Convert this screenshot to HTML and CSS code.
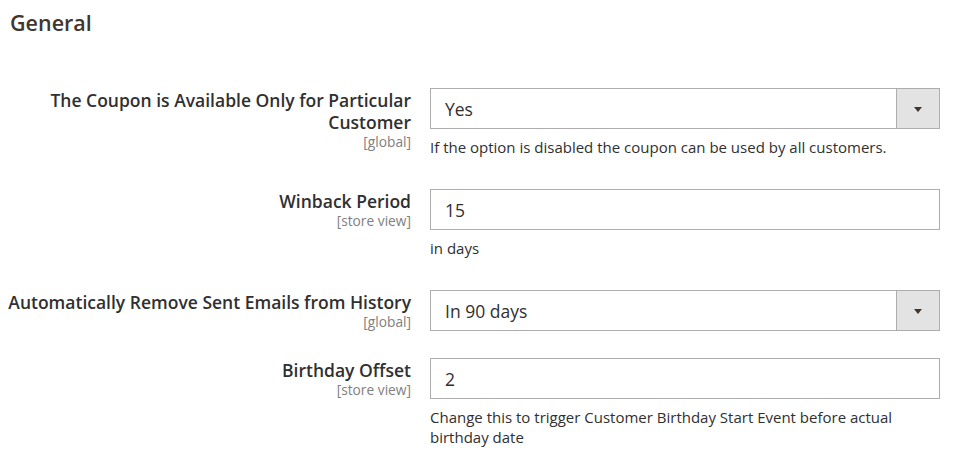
FILE: index.html
```html
<!DOCTYPE html>
<html>
<head>
<meta charset="utf-8">
<link rel="stylesheet" href="styles.css">
</head>
<body>
<div class="page">
  <h2 class="title">General</h2>
  <div class="fields">
    <div class="row">
      <div class="label">
        <span class="name narrow">The Coupon is Available Only for Particular Customer</span>
        <span class="scope">[global]</span>
      </div>
      <div class="control">
        <div class="select"><span class="value">Yes</span><span class="btn"><span class="arrow"></span></span></div>
        <div class="note">If the option is disabled the coupon can be used by all customers.</div>
      </div>
    </div>
    <div class="row">
      <div class="label">
        <span class="name">Winback Period</span>
        <span class="scope">[store view]</span>
      </div>
      <div class="control">
        <div class="input"><span class="value">15</span></div>
        <div class="note">in days</div>
      </div>
    </div>
    <div class="row">
      <div class="label">
        <span class="name">Automatically Remove Sent Emails from History</span>
        <span class="scope">[global]</span>
      </div>
      <div class="control">
        <div class="select"><span class="value">In 90 days</span><span class="btn"><span class="arrow"></span></span></div>
      </div>
    </div>
    <div class="row">
      <div class="label">
        <span class="name">Birthday Offset</span>
        <span class="scope">[store view]</span>
      </div>
      <div class="control">
        <div class="input"><span class="value">2</span></div>
        <div class="note">Change this to trigger Customer Birthday Start Event before actual birthday date</div>
      </div>
    </div>
  </div>
</div>
</body>
</html>
```

FILE: styles.css
```css
* { box-sizing: border-box; }
html, body { margin: 0; padding: 0; background: #fff; }
body { font-family: "Open Sans", "DejaVu Sans", sans-serif; color: #303030; }
.page { padding: 10px 14px 0 2px; }
.title {
  margin: 0 0 0 8px;
  font-size: 21.5px;
  font-weight: 600;
  line-height: 26px;
  color: #41362f;
}
.fields { display: flex; flex-direction: column; gap: 27px; margin-top: 52px; }
.row { display: grid; grid-template-columns: 409px 510px; column-gap: 19px; }
.label { display: flex; flex-direction: column; align-items: flex-end; text-align: right; padding-top: 1px; }
.name { font-size: 17.5px; font-weight: 600; line-height: 22px; color: #303030; white-space: nowrap; }
.name.narrow { white-space: normal; max-width: 380px; }
.scope { font-size: 13.75px; line-height: 17px; color: #808080; }
.control { display: flex; flex-direction: column; }
.select, .input {
  height: 41px;
  border: 1px solid #adadad;
  display: flex;
  align-items: center;
  background: #fff;
}
.value { flex: 1; padding-left: 14px; font-size: 17.5px; color: #303030; line-height: 22px; }
.btn {
  width: 43px;
  align-self: stretch;
  background: #e3e3e3;
  border-left: 1px solid #adadad;
  display: flex;
  align-items: center;
  justify-content: center;
}
.arrow {
  width: 0; height: 0;
  border-left: 4.5px solid transparent;
  border-right: 4.5px solid transparent;
  border-top: 5px solid #41362f;
  margin-top: 1px;
}
.note { margin-top: 8px; padding-bottom: 5px; font-size: 15px; line-height: 20px; color: #303030; max-width: 470px; }
```
